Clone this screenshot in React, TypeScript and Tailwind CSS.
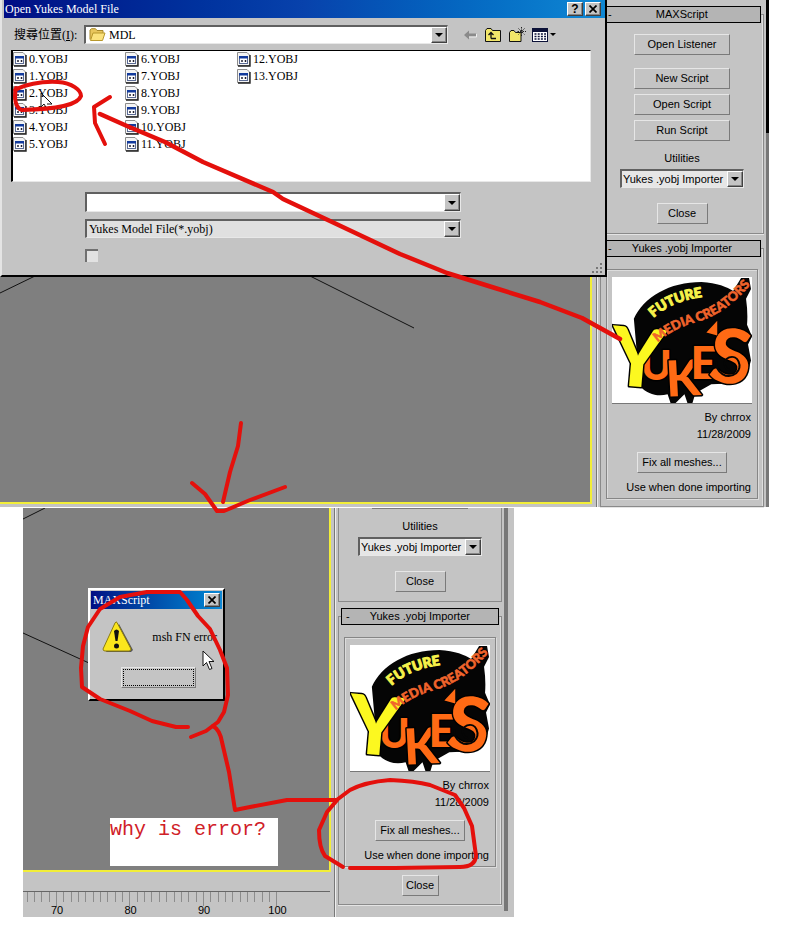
import type { ReactNode } from "react";

const SERIF = "font-['Liberation_Serif','Noto_Sans_CJK_TC',serif]";
const RAISED =
  "border border-t-white border-l-white border-r-[#404040] border-b-[#404040] bg-[#c4c4c4] shadow-[inset_-1px_-1px_0_#868686]";
const SOFT =
  "border border-t-[#e6e6e6] border-l-[#e6e6e6] border-r-[#7a7a7a] border-b-[#7a7a7a] bg-[#c4c4c4]";
const SUNKEN =
  "border-t-2 border-l-2 border-b border-r border-t-[#606060] border-l-[#606060] border-b-[#e8e8e8] border-r-[#e8e8e8]";

function Caret() {
  return (
    <svg width="8" height="4" viewBox="0 0 8 4" aria-hidden="true">
      <path d="M0 0H8L4 4Z" fill="#000" />
    </svg>
  );
}

function DropArrow() {
  return (
    <span className={`pointer-events-none col-start-1 row-start-1 flex w-4 items-center justify-center justify-self-end ${RAISED}`}>
      <Caret />
    </span>
  );
}

function DropDown({ label, value, tone, indent }: { label: string; value: string; tone: string; indent: string }) {
  return (
    <div className={`grid w-full ${SUNKEN} ${tone}`}>
      <select aria-label={label} className={`col-start-1 row-start-1 h-4 w-full appearance-none bg-transparent outline-none ${indent}`}>
        <option>{value}</option>
      </select>
      <DropArrow />
    </div>
  );
}

function TitleButton({ label, children }: { label: string; children: ReactNode }) {
  return (
    <button aria-label={label} className={`flex h-[14px] w-4 items-center justify-center ${RAISED}`}>
      {children}
    </button>
  );
}

function CloseMark() {
  return (
    <svg width="8" height="8" viewBox="0 0 8 8" aria-hidden="true">
      <path d="M0.5 0.5L7.5 7.5M7.5 0.5L0.5 7.5" stroke="#000" strokeWidth="1.7" />
    </svg>
  );
}

function FileIcon() {
  return (
    <svg width="14" height="15" viewBox="0 0 14 15" aria-hidden="true">
      <path d="M0.5 0.5H10L12.5 3V13.5H0.5Z" fill="#f4f4f4" stroke="#8c8c8c" />
      <path d="M13 3V14H1" fill="none" stroke="#222" strokeWidth="1.4" />
      <rect x="2.5" y="4.5" width="8" height="7" fill="#fff" stroke="#5b6b94" />
      <rect x="2" y="4" width="9" height="2.5" fill="#123a9c" />
      <path d="M4 9H6M5 8V10M7.5 9H9.5M8.5 8V10" stroke="#223" />
    </svg>
  );
}

function FolderIcon() {
  return (
    <svg width="17" height="14" viewBox="0 0 17 14" aria-hidden="true">
      <path d="M1 11.5V2L2.5 0.7H6.5L8 2.5H14V5" fill="#e8c65c" stroke="#a98a2c" />
      <path d="M1.5 12.5L4 5H16L13.5 12.5Z" fill="#fbe27c" stroke="#b8982c" />
    </svg>
  );
}

function DialogTools() {
  return (
    <div className="flex items-center">
      <button aria-label="Back" className="mr-2">
        <svg width="13" height="10" viewBox="0 0 13 10">
          <path d="M0 5L5 0.5V3.5H12V6.5H5V9.5Z" fill="#8a8a8a" />
          <path d="M5 7H12.5V4" fill="none" stroke="#eee" />
        </svg>
      </button>
      <button aria-label="Up one level" className="mr-2">
        <svg width="16" height="14" viewBox="0 0 16 14">
          <path d="M0.5 13.5V2.5L2 0.5H6L7.5 2.5H15.5V13.5Z" fill="#f2e66a" stroke="#111" />
          <path d="M6 10.5H11M6 10.5V5.5M3.5 7L6 4.5L8.5 7" fill="none" stroke="#111" strokeWidth="1.3" />
        </svg>
      </button>
      <button aria-label="New folder" className="mr-1.5">
        <svg width="17" height="15" viewBox="0 0 17 15">
          <path d="M0.5 14.5V5.5L2 3.5H5L6.5 5.5H12V14.5Z" fill="#f2e66a" stroke="#111" />
          <path d="M12.5 0V9M8.5 4.5H17M9.5 1.5L15.5 7.5M15.5 1.5L9.5 7.5" stroke="#222" strokeDasharray="1.5 1" />
        </svg>
      </button>
      <button aria-label="View" className="flex items-center gap-0.5">
        <svg width="16" height="14" viewBox="0 0 16 14">
          <rect x="0.5" y="0.5" width="15" height="13" fill="#fff" stroke="#0c1238" />
          <rect width="16" height="4" fill="#0c1238" />
          <path d="M2.5 6H14M2.5 8.5H14M2.5 11H14" stroke="#0c1238" strokeWidth="1.5" strokeDasharray="2 1.2" />
        </svg>
        <svg width="6" height="3" viewBox="0 0 6 3">
          <path d="M0 0H6L3 3Z" />
        </svg>
      </button>
    </div>
  );
}

const FILES = Array.from({ length: 14 }, (_, i) => `${i}.YOBJ`);

function OpenDialog() {
  return (
    <section
      aria-label="Open Yukes Model File"
      className={`absolute top-0 left-0 w-[607px] border-r-2 border-b-2 border-l-2 border-r-black border-b-black border-l-[#e4e4e4] bg-[#c4c4c4] pl-0.5 text-xs leading-4 ${SERIF}`}
    >
      <header className="flex h-[18px] items-center justify-between bg-linear-to-r from-[#000c84] via-[#0842ac] to-[#1088d4] pr-1 pl-px text-white">
        <h1>Open Yukes Model File</h1>
        <div className="flex gap-0.5">
          <TitleButton label="Help">
            <span className="font-['Liberation_Sans',sans-serif] text-xs font-bold text-black">?</span>
          </TitleButton>
          <TitleButton label="Close">
            <CloseMark />
          </TitleButton>
        </div>
      </header>

      <div className="mt-[7px] flex items-center pl-2.5">
        <span className="w-[70px] text-xs whitespace-nowrap">
          搜尋位置(<u>I</u>):
        </span>
        <div className={`grid w-[364px] ${SUNKEN} bg-white`}>
          <div className="col-start-1 row-start-1 flex items-center pl-[3px]">
            <FolderIcon />
            <select aria-label="Look in" className="h-4 flex-1 appearance-none bg-transparent pl-[3px] outline-none">
              <option>MDL</option>
            </select>
          </div>
          <DropArrow />
        </div>
        <div className="ml-4">
          <DialogTools />
        </div>
      </div>

      <ul className="mt-1.5 mr-[14px] ml-[7px] grid h-[132px] grid-flow-col auto-cols-[112px] grid-rows-[repeat(6,17px)] border-t border-r border-b border-l-2 border-t-black border-l-black border-r-[#e8e8e8] border-b-[#e8e8e8] bg-white">
        {FILES.map((name) => (
          <li key={name} className="flex h-4 items-center gap-0.5">
            <FileIcon />
            {name}
          </li>
        ))}
      </ul>

      <div className="mt-2.5 ml-[81px] flex w-[376px] flex-col gap-[7px]">
        <div className={`grid ${SUNKEN} bg-white`}>
          <input aria-label="File name" className="col-start-1 row-start-1 h-[17px] w-full bg-transparent px-1 outline-none" />
          <DropArrow />
        </div>
        <DropDown label="File type" value="Yukes Model File(*.yobj)" tone="bg-[#e0e0e0]" indent="pl-0.5" />
        <input
          type="checkbox"
          aria-label="Open as read-only"
          className="mt-1 size-[13px] appearance-none border-t-2 border-l-2 border-t-[#707070] border-l-[#707070] bg-[#e2e2e2]"
        />
      </div>
      <div className="flex justify-end pt-px pr-0.5 pb-0.5">
        <svg width="12" height="10" viewBox="0 0 12 10" aria-hidden="true">
          <path d="M9 0h2v2h-2zM5 4h2v2h-2zM9 4h2v2h-2zM1 8h2v2h-2zM5 8h2v2h-2zM9 8h2v2h-2z" fill="#777" />
        </svg>
      </div>
    </section>
  );
}

function Logo({ id }: { id: string }) {
  return (
    <svg
      viewBox="0 0 141 127"
      className="w-full bg-white font-['Lato',sans-serif] font-black"
      role="img"
      aria-label="Yuke's, Future Media Creators"
    >
      <defs>
        <path id={`${id}-a`} d="M42 41Q60 24 92 20" />
        <path id={`${id}-b`} d="M46 66Q62 51 87 45Q114 37 140 7" />
      </defs>
      <path
        d="M22 42C32 20 58 5 90 5C106 6 116 10 122 14L130 1H138L140 12L135 22Q137 36 136 48L141 60L137 68L140 84L136 98L124 107L100 108L84 117L81 127H76L73 118L64 127H59L56 118C46 121 36 118 28 110Z"
        fill="#050505"
      />
      <g stroke="#000" strokeWidth="3" strokeLinejoin="round" paintOrder="stroke">
        <g fill="#ff6a14">
          <text x="29" y="104" fontSize="42">
            U
          </text>
          <text x="54" y="120" fontSize="50" transform="rotate(-3 65 100)">
            K
          </text>
          <text x="79" y="103" fontSize="46">
            E
          </text>
          <text x="99" y="107" fontSize="76" transform="rotate(6 118 80)">
            S
          </text>
          <path d="M95 56L106 44L106 59Z" strokeWidth="1" />
        </g>
        <text x="-1" y="110" fontSize="82" fill="#fcf820" transform="rotate(5 20 80)">
          Y
        </text>
      </g>
      <path
        d="M119 94C113 93 111 84 118 81C127 78 132 90 125 97C116 104 104 96 105 85"
        fill="none"
        stroke="#050505"
        strokeWidth="2"
      />
      <g strokeWidth="1" strokeLinejoin="round">
        <text fill="#f6f24a" stroke="#f6f24a" fontSize="14">
          <textPath href={`#${id}-a`}>FUTURE</textPath>
        </text>
        <text fill="#f0642c" stroke="#f0642c" strokeWidth="0.6" fontSize="13">
          <textPath href={`#${id}-b`}>MEDIA CREATORS</textPath>
        </text>
      </g>
    </svg>
  );
}

function Rollout({ title, children }: { title: string; children: ReactNode }) {
  return (
    <section className="flex flex-col pt-1.5">
      <div className="mt-2 flex grow flex-col border border-[#8a8a8a] shadow-[inset_-1px_0_0_#dedede,0_1px_0_#e4e4e4]">
        <h2 className="mx-0.5 -mt-[9px] flex h-[17px] items-center border border-black bg-[#b4b4b4] px-1">
          <span>-</span>
          <span className="flex-1 pr-1 text-center">{title}</span>
        </h2>
        {children}
      </div>
    </section>
  );
}

function PushButton({ width, children }: { width: string; children: ReactNode }) {
  return <button className={`flex h-[21px] items-center justify-center ${width} ${SOFT}`}>{children}</button>;
}

function UtilityPicker() {
  return (
    <>
      <p className="mt-[9px] leading-4">Utilities</p>
      <div className="mt-[3px] w-[124px]">
        <DropDown label="Utilities" value="Yukes .yobj Importer" tone="bg-[#e6e6e6]" indent="pl-px" />
      </div>
      <div className="mt-[15px] mb-[9px]">
        <PushButton width="w-[51px]">Close</PushButton>
      </div>
    </>
  );
}

function Importer({ id }: { id: string }) {
  return (
    <div className="mx-[5px] mt-[12px] border border-[#868686] px-[5px] pt-[7px] shadow-[1px_1px_0_#dcdcdc,inset_1px_1px_0_#dcdcdc]">
      <div className="flex border-b border-[#777]">
        <Logo id={id} />
      </div>
      <p className="mt-[5px] pr-px text-right leading-[17px]">
        By chrrox
        <br />
        11/28/2009
      </p>
      <div className="mt-[9px] flex justify-center">
        <PushButton width="w-[90px]">Fix all meshes...</PushButton>
      </div>
      <p className="mt-1.5 mb-[3px] pr-px text-right leading-4 whitespace-nowrap">Use when done importing</p>
    </div>
  );
}

function Ruler() {
  const ticks = Array.from({ length: 35 }, (_, i) => 4.5 + i * 7.35);
  const labels = [70, 80, 90, 100];
  return (
    <svg width="308" height="26" viewBox="0 0 308 26" className="mt-[19px] text-[11px]" aria-label="Time line">
      <path d="M0 0.5H307" stroke="#666" />
      {ticks.map((x, i) => (
        <path key={i} d={`M${Math.round(x) - 0.5} 1V${i % 10 === 4 ? 15 : 11}`} stroke="#8c8c8c" />
      ))}
      {labels.map((n, i) => (
        <text key={n} x={34 + i * 73.5} y="23" textAnchor="middle">
          {n}
        </text>
      ))}
    </svg>
  );
}

function Pointer() {
  return (
    <svg width="13" height="21" viewBox="0 0 13 21" aria-hidden="true">
      <path d="M1 1V16L4.5 12.5L7.5 19.5L10 18.5L7 11.5H12Z" fill="#fff" stroke="#111" />
    </svg>
  );
}

function ErrorDialog() {
  return (
    <section
      aria-label="MAXScript error"
      className={`absolute top-[80px] left-[65px] w-[137px] border-2 border-t-white border-r-black border-b-black border-l-white bg-[#c4c4c4] px-px pt-px pb-[11px] text-xs ${SERIF}`}
    >
      <header className="flex h-[18px] items-center justify-between bg-linear-to-r from-[#000c84] to-[#1088d4] pr-0.5 pl-0.5 text-white">
        <h2>MAXScript</h2>
        <TitleButton label="Close">
          <CloseMark />
        </TitleButton>
      </header>
      <div className="mt-3 flex items-center justify-between pl-[11px] whitespace-nowrap">
        <svg width="32" height="32" viewBox="0 0 32 32" aria-hidden="true">
          <path d="M17 3L31 29L29 31H4Z" fill="#555" />
          <path d="M15 1.5L29 28Q29 30 27 30H3Q1 30 1 28L13 2Q14 0 15 1.5Z" fill="#fbe61c" stroke="#8c7c10" />
          <path d="M12 10Q14.5 7 17 10L15.5 20H13.5Z" fill="#111" />
          <circle cx="14.5" cy="25" r="2.5" fill="#111" />
        </svg>
        <p className="pr-[5px]">msh FN error</p>
      </div>
      <div className="mt-[14px] flex justify-center pr-5 pl-6">
        <button aria-label="OK" className={`h-[21px] w-[75px] p-px ${SOFT}`}>
          <span className="block h-full border border-dotted border-black" />
        </button>
      </div>
    </section>
  );
}

function Annotations() {
  return (
    <svg
      className="pointer-events-none absolute top-0 left-0"
      width="798"
      height="926"
      viewBox="0 0 798 926"
      fill="none"
      stroke="#e4100c"
      strokeWidth="4"
      strokeLinecap="round"
      strokeLinejoin="round"
      aria-hidden="true"
    >
      <path d="M15 90C24 85 40 81 58 82C72 83 81 90 81 96C78 105 58 109 22 110C15 108 14 98 16 88" />
      <path d="M110 97L94 107L95 123L105 144" />
      <path strokeWidth="4.5" d="M100 114L127 126L165 142L203 162L273 192L283 199L330 221L400 254L447 273L495 288L540 302L582 318L620 339" />
      <path d="M241 423L238 446L230 472L223 502" />
      <path d="M192 483L205 494L217 511L224 511L250 500L285 487" />
      <path d="M188 727H176L152 721L130 711L100 699L82 687L81 668L83 646L88 627L100 609L120 597L147 592H180L187 600L198 616L210 629L220 650L227 668L228 695L224 712L218 722L206 731L191 737" />
      <path d="M213 726Q220 730 222 742L229 772L235 810L250 807L287 800H336" />
      <path d="M343 867L325 856Q319 848 319 830L327 812L338 799L350 790Q365 782 390 780Q415 781 430 785L455 795L464 808L472 826L476 856Q475 867 460 867L395 868H350" />
    </svg>
  );
}

export default function App() {
  return (
    <main className="relative min-h-[926px] bg-white font-['Liberation_Sans',sans-serif] text-[11px] text-black">
      <section className="relative flex w-full max-w-[769px] bg-[#c4c4c4]">
        <div className="flex flex-1 flex-col pb-[3px]">
          <div className="flex-1 border-r-2 border-b-2 border-[#f2ee38] bg-[#7f7f7f]">
            <svg width="420" height="340" viewBox="0 0 420 340" stroke="#111" aria-hidden="true">
              <path d="M0 293L35 276M310 276L414 328" />
            </svg>
          </div>
        </div>
        <div className="ml-1 w-[170px] border-l border-[#777] pr-0.5 pl-[3px] shadow-[inset_1px_0_0_#eee]">
          <Rollout title="MAXScript">
            <div className="flex flex-col items-center">
              <div className="mt-[11px] flex flex-col gap-[5px]">
                <div className="mb-2">
                  <PushButton width="w-24">Open Listener</PushButton>
                </div>
                <PushButton width="w-24">New Script</PushButton>
                <PushButton width="w-24">Open Script</PushButton>
                <PushButton width="w-24">Run Script</PushButton>
              </div>
              <UtilityPicker />
            </div>
          </Rollout>
          <Rollout title="Yukes .yobj Importer">
            <Importer id="upper" />
            <div className="h-[7px]" />
          </Rollout>
        </div>
        <div className="flex w-[3px] flex-col">
          <div className="h-[133px] bg-black" />
          <div className="flex-1 bg-[#777]" />
        </div>
        <OpenDialog />
      </section>

      <section className="relative mt-px ml-[23px] flex w-full max-w-[491px] bg-[#c4c4c4]">
        <div className="flex flex-1 flex-col">
          <div className="mr-[3px] flex flex-1 flex-col justify-between border-r-2 border-b-2 border-[#f2ee38] bg-[#7f7f7f]">
            <svg width="70" height="160" viewBox="0 0 70 160" stroke="#111" aria-hidden="true">
              <path d="M0 11L22 0M0 125L66 155" />
            </svg>
            <p className="mb-1 ml-[87px] h-12 w-[168px] bg-white font-['Liberation_Mono',monospace] text-[20px] leading-6 text-[#d02028]">
              why is error?
            </p>
          </div>
          <Ruler />
        </div>
        <div className="w-[170px] border-l border-[#777] pr-0.5 pb-3 pl-[3px] shadow-[inset_1px_0_0_#eee]">
          <div className="flex flex-col items-center border-r border-b border-l border-[#8a8a8a]">
            <div className="h-px w-24 bg-[#7a7a7a]" />
            <UtilityPicker />
          </div>
          <Rollout title="Yukes .yobj Importer">
            <Importer id="lower" />
            <div className="my-2 flex justify-center">
              <PushButton width="w-[37px]">Close</PushButton>
            </div>
          </Rollout>
        </div>
        <div className="mb-1.5 w-1 bg-[#777]" />
        <div className="w-1.5" />
        <ErrorDialog />
        <div className="absolute top-[142px] left-[179px]">
          <Pointer />
        </div>
      </section>

      <div className="absolute top-[91px] left-[40px]">
        <svg width="14" height="20" viewBox="0 0 14 20" aria-hidden="true">
          <path d="M1 2V16L4 13L7 18M1 2L12 13H7" fill="none" stroke="#111" />
        </svg>
      </div>
      <Annotations />
    </main>
  );
}
